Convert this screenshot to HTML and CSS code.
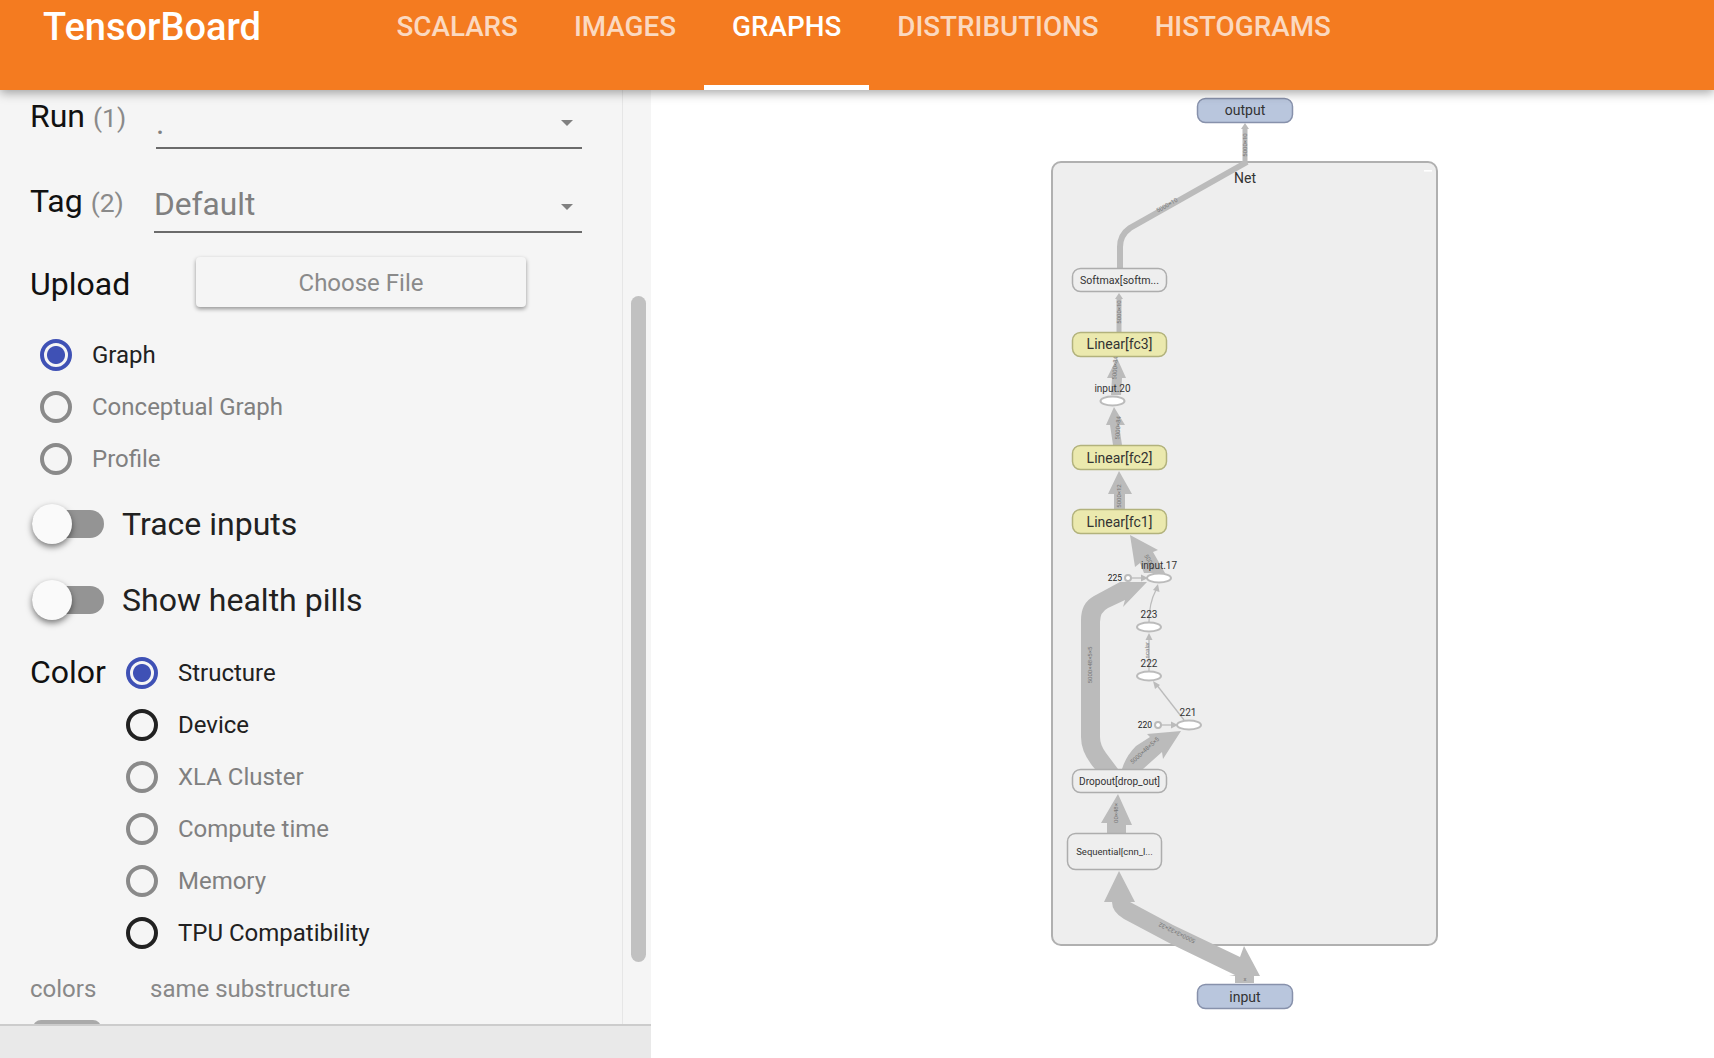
FILE: index.html
```html
<!DOCTYPE html>
<html lang="en">
<head>
    <meta charset="UTF-8">
    <title>TensorBoard</title>
    <link rel="stylesheet" href="styles.css">
</head>
<body>
    <header class="toolbar">
        <div class="brand">TensorBoard</div>
        <nav class="tabs">
            <a class="tab">SCALARS</a>
            <a class="tab">IMAGES</a>
            <a class="tab selected">GRAPHS</a>
            <a class="tab">DISTRIBUTIONS</a>
            <a class="tab">HISTOGRAMS</a>
        </nav>
    </header>

    <div class="dashboard">
        <aside class="sidebar">
            <div class="sidebar-scroll">
                <div class="controls">
                    <div class="select-row run-row">
                        <div class="field-label">Run <span class="count">(1)</span></div>
                        <div class="select run-select"><span class="select-value small">.</span><span class="caret"></span></div>
                    </div>
                    <div class="select-row tag-row">
                        <div class="field-label">Tag <span class="count">(2)</span></div>
                        <div class="select tag-select"><span class="select-value">Default</span><span class="caret"></span></div>
                    </div>
                    <div class="upload-row">
                        <div class="field-label">Upload</div>
                        <button class="file-btn">Choose File</button>
                    </div>
                    <div class="radio-group graph-modes">
                        <div class="radio on"><span class="ring"></span>Graph</div>
                        <div class="radio"><span class="ring"></span>Conceptual Graph</div>
                        <div class="radio"><span class="ring"></span>Profile</div>
                    </div>
                    <div class="toggle-row">
                        <div class="toggle"><span class="knob"></span></div>
                        <span>Trace inputs</span>
                    </div>
                    <div class="toggle-row">
                        <div class="toggle"><span class="knob"></span></div>
                        <span>Show health pills</span>
                    </div>
                    <div class="color-row">
                        <div class="field-label color-label">Color</div>
                        <div class="radio-group">
                            <div class="radio on"><span class="ring"></span>Structure</div>
                            <div class="radio active"><span class="ring"></span>Device</div>
                            <div class="radio"><span class="ring"></span>XLA Cluster</div>
                            <div class="radio"><span class="ring"></span>Compute time</div>
                            <div class="radio"><span class="ring"></span>Memory</div>
                            <div class="radio active"><span class="ring"></span>TPU Compatibility</div>
                        </div>
                    </div>
                    <div class="legend-row">
                        <span class="legend-key">colors</span>
                        <span>same substructure</span>
                    </div>
                    <div class="legend-swatch"></div>
                </div>
                <div class="scroll-track"><div class="scroll-thumb"></div></div>
            </div>
            <div class="sidebar-foot"></div>
        </aside>

        <main class="graph-pane">
            <svg class="graph" width="1063" height="968" viewBox="651 90 1063 968">
                <!-- Net group -->
                <rect class="group" x="1052" y="162" width="385" height="783" rx="9"/>
                <rect class="collapse" x="1424" y="170" width="8" height="1.6"/>
                <text class="node-text" x="1245" y="183">Net</text>

                <!-- edges -->
                <g class="edges">
                    <polygon points="1242.500,164 1242.500,129 1241,129 1245,123 1249,129 1247.500,129 1247.500,164"/>
                    <path class="edge-line wide" d="M1247 162 L1130 228 Q1120 235 1120 247 L1120 268"/>
                    <polygon points="1116.500,332 1116.500,299 1115,299 1119,293 1123,299 1121.500,299 1121.500,332"/>
                    <polygon points="1111,395 1112,378 1107,378 1117,358 1126,378 1122,378 1121,395"/>
                    <polygon points="1113,445 1110,425 1106,425 1114,407 1125,425 1119,425 1122,445"/>
                    <polygon points="1114,509 1114,494 1108,494 1119,471 1132,494 1125,494 1125,509"/>
                    <polygon points="1130,535 1158,550 1153,552 1165,573 1144,573 1140,563 1135,567"/>
                    <path d="M1095 769 Q1081 753 1081 737 L1081 620 Q1081 603 1094 596 L1120 582 L1147 582 L1123 607 L1125 600 L1108 608 Q1100 612 1100 622 L1100 737 Q1100 745 1106 753 L1118 769 Z"/>
                    <path d="M1122 769 Q1126 756 1136 746 L1150 737 L1147 734 L1181 731 L1163 759 L1162 752 L1143 769 Z"/>
                    <polygon points="1107,833 1107,823 1101,823 1118,794 1132,825 1126,825 1126,833"/>
                    <path d="M1130 902 L1135 902 L1119 871 L1104 902 L1112 902 Q1112 912 1124 919 L1173 945 L1235 975 L1229 976 L1235 976 L1235 983 L1254 983 L1254 976 L1260 976 L1244 946 L1240 957 L1173 925 Z"/>
                </g>
                <g class="thin-edges">
                    <path d="M1131 578 L1142 578"/>
                    <polygon class="thin-head" points="1141,574.500 1148,578 1141,581.500"/>
                    <path d="M1161 725 L1172 725"/>
                    <polygon class="thin-head" points="1171,721.500 1178,725 1171,728.500"/>
                    <path d="M1184 720 L1156 684"/>
                    <polygon class="thin-head" points="1153,681 1160,685 1155,689"/>
                    <path d="M1149 672 L1149 638"/>
                    <polygon class="thin-head" points="1149,633 1152.500,640 1145.500,640"/>
                    <path d="M1149 622 Q1149 603 1156 590"/>
                    <polygon class="thin-head" points="1158,584 1159.500,592 1153,590"/>
                </g>

                <!-- edge labels -->
                <g class="edge-labels">
                    <text transform="translate(1247 145) rotate(-90)">5000×10</text>
                    <text transform="translate(1168 207) rotate(-30)">5000×10</text>
                    <text transform="translate(1121 312) rotate(-90)">5000×10</text>
                    <text transform="translate(1117 368) rotate(-86)">5000×84</text>
                    <text transform="translate(1120 428) rotate(-86)">5000×84</text>
                    <text transform="translate(1121 496) rotate(-90)">5000×12</text>
                    <text transform="translate(1148 563) rotate(62)">5000×</text>
                    <text transform="translate(1092 665) rotate(-90)">5000×48×5×5</text>
                    <text transform="translate(1146 752) rotate(-42)">5000×48×5×5</text>
                    <text transform="translate(1149 650) rotate(-90)">scalar</text>
                    <text transform="translate(1118 813) rotate(-90)">00×48×</text>
                    <text transform="translate(1178 931) rotate(206)">5000×3×32×32</text>
                    <text transform="translate(1245 981)">x</text>
                </g>

                <!-- nodes -->
                <rect class="node io" x="1197.500" y="98.500" width="95" height="24" rx="8"/>
                <text class="node-text" x="1245" y="115">output</text>

                <rect class="node plain" x="1072.500" y="268.500" width="94" height="23" rx="8"/>
                <text class="node-text small" x="1119.500" y="284">Softmax[softm...</text>

                <rect class="node linear" x="1072.500" y="332.500" width="94" height="24" rx="8"/>
                <text class="node-text" x="1119.500" y="349">Linear[fc3]</text>

                <rect class="node linear" x="1072.500" y="445.500" width="94" height="24" rx="8"/>
                <text class="node-text" x="1119.500" y="463">Linear[fc2]</text>

                <rect class="node linear" x="1072.500" y="509.500" width="94" height="24" rx="8"/>
                <text class="node-text" x="1119.500" y="527">Linear[fc1]</text>

                <rect class="node plain" x="1072.500" y="769.500" width="94" height="23" rx="8"/>
                <text class="node-text fitted" x="1119.500" y="785">Dropout[drop_out]</text>

                <rect class="node plain" x="1067.500" y="833.500" width="94" height="36" rx="8"/>
                <text class="node-text tiny" x="1114.500" y="855">Sequential[cnn_l...</text>

                <rect class="node io" x="1197.500" y="984.500" width="95" height="24" rx="8"/>
                <text class="node-text" x="1245" y="1002">input</text>

                <!-- op nodes -->
                <ellipse class="op" cx="1112.500" cy="401" rx="12" ry="4.500"/>
                <text class="op-text" x="1112.500" y="392">input.20</text>
                <ellipse class="op" cx="1159" cy="578" rx="12" ry="4.500"/>
                <text class="op-text" x="1159" y="569">input.17</text>
                <ellipse class="op" cx="1149" cy="627" rx="12" ry="4.500"/>
                <text class="op-text" x="1149" y="618">223</text>
                <ellipse class="op" cx="1149" cy="676" rx="12" ry="4.500"/>
                <text class="op-text" x="1149" y="667">222</text>
                <ellipse class="op" cx="1189" cy="725" rx="12" ry="4.500"/>
                <text class="op-text" x="1188" y="716">221</text>
                <circle class="op" cx="1128" cy="578" r="3"/>
                <text class="const-text" x="1122" y="581">225</text>
                <circle class="op" cx="1158" cy="725" r="3"/>
                <text class="const-text" x="1152" y="728">220</text>
            </svg>
        </main>
    </div>
</body>
</html>
```

FILE: styles.css
```css
* {
    box-sizing: border-box;
}
html, body {
    height: 100%;
}
body {
    margin: 0;
    font-family: Roboto, sans-serif;
    background: white;
    color: #212121;
    overflow: hidden;
}

/* toolbar */
.toolbar {
    position: relative;
    z-index: 2;
    display: flex;
    height: 90px;
    background: #f47b20;
    box-shadow: 0 3px 10px rgba(0, 0, 0, 0.35);
}
.brand {
    width: 368.500px;
    padding-left: 43px;
    color: white;
    font-size: 38px;
    font-weight: 500;
    line-height: 54px;
}
.tabs {
    display: flex;
}
.tab {
    height: 90px;
    padding: 0 28px;
    color: rgba(255, 255, 255, 0.72);
    font-size: 27.800px;
    font-weight: 500;
    line-height: 54px;
}
.tab.selected {
    color: white;
    border-bottom: 5px solid white;
}

/* layout */
.dashboard {
    display: flex;
    height: 968px;
}
.sidebar {
    display: flex;
    flex-direction: column;
    width: 651px;
    background: #f5f5f5;
}
.sidebar-scroll {
    display: flex;
    height: 936px;
    border-bottom: 2px solid #ccc;
    overflow: hidden;
}
.sidebar-foot {
    flex: 1;
    background: #e9e9e9;
}
.controls {
    width: 623px;
    height: 100%;
    padding-left: 30px;
    border-right: 1px solid #e6e6e6;
    overflow: hidden;
}
.scroll-track {
    flex: 1;
    padding: 206px 5px 0 8px;
}
.scroll-thumb {
    height: 666px;
    border-radius: 8px;
    background: #c1c1c1;
}

/* selects */
.select-row {
    display: flex;
    align-items: flex-start;
}
.run-row {
    height: 60px;
    padding-top: 7px;
}
.run-row .field-label {
    width: 126px;
}
.tag-row {
    height: 92px;
    padding-top: 32px;
}
.tag-row .field-label {
    width: 124px;
}
.field-label {
    color: #111;
    font-size: 32px;
    line-height: 38px;
    white-space: nowrap;
}
.count {
    color: #8a8a8a;
    font-size: 26.500px;
}
.select {
    position: relative;
    border-bottom: 2px solid #6b6b6b;
    color: #808080;
}
.run-select {
    width: 426px;
    height: 51px;
    margin-top: 1px;
}
.tag-select {
    width: 428px;
    height: 51px;
    margin-top: 0;
}
.select-value {
    font-size: 31.700px;
    line-height: 46px;
}
.select-value.small {
    line-height: 52px;
}
.caret {
    position: absolute;
    right: 9px;
    top: 22px;
    border-left: 6.500px solid transparent;
    border-right: 6.500px solid transparent;
    border-top: 6.500px solid #808080;
}

/* upload */
.upload-row {
    display: flex;
    align-items: flex-start;
    height: 87px;
    padding-top: 23px;
}
.upload-row .field-label {
    width: 166px;
}
.file-btn {
    width: 330px;
    height: 50px;
    margin-top: -8px;
    padding-top: 3px;
    border: none;
    border-radius: 4px;
    background: #f5f5f5;
    box-shadow: 0 2px 4px rgba(0, 0, 0, 0.4);
    color: #8a8a8a;
    font-family: Roboto, sans-serif;
    font-size: 24px;
}

/* radios */
.radio-group {
    display: flex;
    flex-direction: column;
}
.graph-modes {
    margin-left: 10px;
}
.radio {
    display: flex;
    align-items: center;
    gap: 20px;
    height: 52px;
    color: #808080;
    font-size: 24px;
}
.radio.on, .radio.active {
    color: #212121;
}
.ring {
    width: 32px;
    height: 32px;
    border: 4px solid #8a8a8a;
    border-radius: 50%;
}
.radio.active .ring {
    border-color: #212121;
}
.radio.on .ring {
    border-color: #3f51b5;
    background: radial-gradient(circle, #3f51b5 0 8.500px, transparent 9.500px);
}

/* toggles */
.toggle-row {
    display: flex;
    align-items: center;
    gap: 18px;
    height: 76px;
    font-size: 32px;
}
.graph-modes + .toggle-row {
    margin-top: 1px;
}
.toggle {
    position: relative;
    width: 72px;
    height: 28px;
    margin-left: 2px;
    border-radius: 14px;
    background: #949494;
}
.knob {
    position: absolute;
    left: 0;
    top: -6px;
    width: 40px;
    height: 40px;
    border-radius: 50%;
    background: #fafafa;
    box-shadow: 0 3px 6px rgba(0, 0, 0, 0.5);
}

/* color + legend */
.color-row {
    display: flex;
    align-items: flex-start;
    margin-top: 9px;
    gap: 20px;
}
.color-label {
    padding-top: 6px;
}
.legend-row {
    display: flex;
    margin-top: 15px;
    color: #888;
    font-size: 24px;
    line-height: 30px;
}
.legend-key {
    width: 120px;
}
.legend-swatch {
    width: 68px;
    height: 16px;
    margin: 16px 0 0 3px;
    border-radius: 8px;
    background: #aaa;
}

/* graph */
.graph-pane {
    flex: 1;
}
.graph {
    display: block;
}
.group {
    fill: #eee;
    stroke: #b0b0b0;
    stroke-width: 2;
}
.collapse {
    fill: white;
}
.edges {
    fill: #bbb;
}
.edge-line {
    fill: none;
    stroke: #bbb;
}
.edge-line.wide {
    stroke-width: 6;
}
.thin-edges path {
    fill: none;
    stroke: #bbb;
    stroke-width: 1.300;
}
.thin-head {
    fill: #bbb;
}
.edge-labels text {
    fill: #777;
    font-size: 6px;
    text-anchor: middle;
}
.node {
    stroke-width: 1.500;
}
.node.io {
    fill: #b9c6dd;
    stroke: #8791ab;
}
.node.plain {
    fill: #eee;
    stroke: #adadad;
}
.node.linear {
    fill: #ebe9ae;
    stroke: #b2b27c;
}
.node-text {
    fill: #333;
    font-size: 14px;
    text-anchor: middle;
}
.node-text.small {
    font-size: 10.600px;
}
.node-text.fitted {
    font-size: 10.100px;
}
.node-text.tiny {
    font-size: 9.500px;
}
.op {
    fill: white;
    stroke: #bbb;
    stroke-width: 2;
}
.op-text {
    fill: #333;
    font-size: 10px;
    text-anchor: middle;
}
.const-text {
    fill: #222;
    font-size: 8.500px;
    text-anchor: end;
}
```
